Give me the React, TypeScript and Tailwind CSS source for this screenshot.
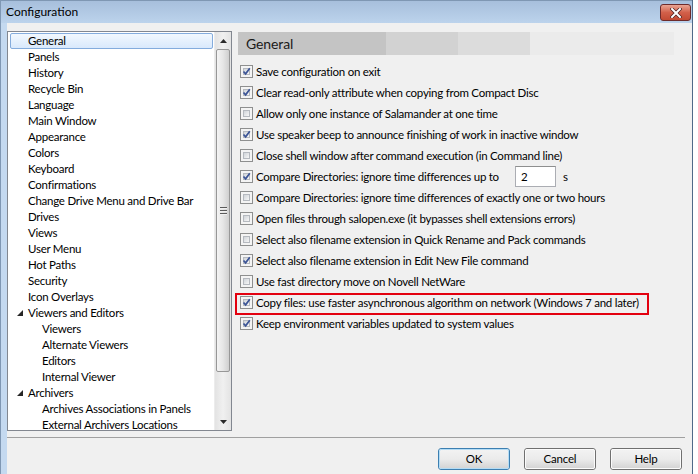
import React from 'react';

const font = { fontFamily: 'Lato, "Noto Sans", sans-serif' };

const treeItems: { label: string; level: number; expanded?: boolean; selected?: boolean }[] = [
    { label: 'General', level: 0, selected: true },
    { label: 'Panels', level: 0 },
    { label: 'History', level: 0 },
    { label: 'Recycle Bin', level: 0 },
    { label: 'Language', level: 0 },
    { label: 'Main Window', level: 0 },
    { label: 'Appearance', level: 0 },
    { label: 'Colors', level: 0 },
    { label: 'Keyboard', level: 0 },
    { label: 'Confirmations', level: 0 },
    { label: 'Change Drive Menu and Drive Bar', level: 0 },
    { label: 'Drives', level: 0 },
    { label: 'Views', level: 0 },
    { label: 'User Menu', level: 0 },
    { label: 'Hot Paths', level: 0 },
    { label: 'Security', level: 0 },
    { label: 'Icon Overlays', level: 0 },
    { label: 'Viewers and Editors', level: 0, expanded: true },
    { label: 'Viewers', level: 1 },
    { label: 'Alternate Viewers', level: 1 },
    { label: 'Editors', level: 1 },
    { label: 'Internal Viewer', level: 1 },
    { label: 'Archivers', level: 0, expanded: true },
    { label: 'Archives Associations in Panels', level: 1 },
    { label: 'External Archivers Locations', level: 1 },
];

const options: { label: string; on: boolean; input?: boolean; marked?: boolean }[] = [
    { label: 'Save configuration on exit', on: true },
    { label: 'Clear read-only attribute when copying from Compact Disc', on: true },
    { label: 'Allow only one instance of Salamander at one time', on: false },
    { label: 'Use speaker beep to announce finishing of work in inactive window', on: true },
    { label: 'Close shell window after command execution (in Command line)', on: false },
    { label: 'Compare Directories: ignore time differences up to', on: true, input: true },
    { label: 'Compare Directories: ignore time differences of exactly one or two hours', on: false },
    { label: 'Open files through salopen.exe (it bypasses shell extensions errors)', on: false },
    { label: 'Select also filename extension in Quick Rename and Pack commands', on: false },
    { label: 'Select also filename extension in Edit New File command', on: true },
    { label: 'Use fast directory move on Novell NetWare', on: false },
    { label: 'Copy files: use faster asynchronous algorithm on network (Windows 7 and later)', on: true, marked: true },
    { label: 'Keep environment variables updated to system values', on: true },
];

const CheckBox = ({ on }: { on: boolean }) => (
    <span className="relative w-[13px] h-[13px] shrink-0 border border-[#8e8f8f] bg-[#f4f4f4]">
        <span className="absolute inset-[2px] border border-[#b5b9bf] bg-gradient-to-br from-[#d0d4d9] to-[#f7f7f7]" />
        {on && (
            <svg className="absolute left-0 top-0" width="11" height="11" viewBox="0 0 11 11">
                <path d="M2.5 5.5 L4.6 7.8 L8.8 2.2" fill="none" stroke="#3b5496" strokeWidth="1.7" />
            </svg>
        )}
    </span>
);

const Button = ({ label, primary }: { label: string; primary?: boolean }) => (
    <div
        className={`w-[72px] h-[22px] rounded-[3px] border flex items-center justify-center text-[11.5px] tracking-[-0.2px] text-black ${primary ? 'border-[#3c7fb1]' : 'border-[#707070]'}`}
    >
        <div
            className={`w-full h-full rounded-[2px] border flex items-center justify-center bg-gradient-to-b from-[#f2f2f2] via-[#ebebeb] to-[#d5d5d5] ${primary ? 'border-[#b4dcf5]' : 'border-[#fbfbfb]'}`}
        >
            {label}
        </div>
    </div>
);

const ScrollBar = () => (
    <div className="w-[17px] h-full flex flex-col bg-gradient-to-r from-[#e3e3e3] via-[#f0f0f0] to-[#e3e3e3] border-l border-[#ececec]">
        <div className="h-[17px] flex items-center justify-center shrink-0">
            <svg width="7" height="4" viewBox="0 0 7 4"><polygon points="0,4 3.5,0 7,4" fill="#2a2a2a" /></svg>
        </div>
        <div className="mx-[1px] h-[323px] rounded-[2px] border border-[#979797] bg-gradient-to-r from-[#f4f4f4] via-[#e6e6e6] to-[#cfcfcf] flex items-center justify-center">
            <div className="flex flex-col gap-[1px]">
                <div className="w-[7px] h-[2px] bg-[#5a5a5a] border-b border-[#f0f0f0]" />
                <div className="w-[7px] h-[2px] bg-[#5a5a5a] border-b border-[#f0f0f0]" />
                <div className="w-[7px] h-[2px] bg-[#5a5a5a] border-b border-[#f0f0f0]" />
            </div>
        </div>
        <div className="flex-1" />
        <div className="h-[17px] flex items-center justify-center shrink-0">
            <svg width="7" height="4" viewBox="0 0 7 4"><polygon points="0,0 3.5,4 7,0" fill="#2a2a2a" /></svg>
        </div>
    </div>
);

const Tree = () => (
    <div className="w-[225px] h-[400px] border border-[#828790] bg-white flex overflow-hidden shrink-0">
        <div className="flex-1 pt-[1px] pl-[2px] overflow-hidden">
            {treeItems.map((it) => (
                <div key={it.label} className="relative h-[16px] flex items-center text-[11.5px] tracking-[-0.25px] text-black whitespace-nowrap">
                    {it.selected && (
                        <div className="absolute left-0 top-0 w-[203px] h-[16px] rounded-[2px] border border-[#84acdd] bg-gradient-to-b from-[#f2f8fe] to-[#d9e9fc]" />
                    )}
                    <div className="w-[18px] shrink-0 flex items-center justify-end pr-[5px]">
                        {it.expanded && (
                            <svg width="6" height="6" viewBox="0 0 6 6"><polygon points="6,0 6,6 0,6" fill="#262626" /></svg>
                        )}
                    </div>
                    <span className={`relative ${it.level === 1 ? 'pl-[14px]' : ''}`}>{it.label}</span>
                </div>
            ))}
        </div>
        <ScrollBar />
    </div>
);

const Panel = () => (
    <div className="flex-1 pl-[6px] pt-[1px]">
        <div className="relative w-[436px] h-[23px] flex bg-[#ebebeb]">
            <div className="w-[148px] bg-[#c4c4c4]" />
            <div className="w-[72px] bg-[#d2d2d2]" />
            <div className="w-[72px] bg-[#dcdcdc]" />
            <div className="absolute left-[8px] inset-y-0 flex items-center text-[14px] tracking-[-0.1px] text-[#1a1a1a]">General</div>
        </div>
        <div className="pt-[6px] pl-[2px]">
            {options.map((o) => (
                <div key={o.label} className="relative h-[21px] flex items-center text-[11.5px] tracking-[-0.25px] text-black whitespace-nowrap">
                    {o.marked && (
                        <div className="absolute left-[-5px] top-[1px] w-[414px] h-[22px] border-2 border-[#e3000f]" />
                    )}
                    <CheckBox on={o.on} />
                    {o.input ? (
                        <>
                            <span className="pl-[3px] w-[262px]">{o.label}</span>
                            <div className="w-[41px] h-[21px] bg-white border border-[#abadb3] border-t-[#8e8f8f] flex items-center pl-[5px]">2</div>
                            <span className="pl-[7px]">s</span>
                        </>
                    ) : (
                        <span className="pl-[3px]">{o.label}</span>
                    )}
                </div>
            ))}
        </div>
    </div>
);

export default function App() {
    return (
        <div className="w-[698px] h-[474px] bg-white overflow-hidden flex" style={font}>
            <div className="w-[693px] h-full flex flex-col border-r border-[#4f6a88] bg-[#c4d9f0]">
                <div className="h-[23px] shrink-0 flex items-center justify-between bg-gradient-to-b from-[#a7bfdc] to-[#bcd3ec] pl-[5px] pr-[1px] border-l border-t border-[#7f97b3]">
                    <span className="text-[12px] text-black">Configuration</span>
                    <div className="w-[31px] h-[17px] mt-[1px] rounded-[3px] border border-[#6d2b2b] bg-gradient-to-b from-[#e8a493] via-[#d2604a] to-[#c24a33] flex items-center justify-center">
                        <svg width="12" height="10" viewBox="0 0 12 10">
                            <path d="M2 1 L10 9 M10 1 L2 9" stroke="#4a2020" strokeWidth="3.4" strokeLinecap="square" />
                            <path d="M2 1 L10 9 M10 1 L2 9" stroke="#ffffff" strokeWidth="2" strokeLinecap="square" />
                        </svg>
                    </div>
                </div>
                <div className="flex-1 flex border-l border-[#7f97b3]">
                    <div className="w-[6px] shrink-0 bg-[#c4d9f0]" />
                    <div className="flex-1 bg-[#f0f0f0] flex flex-col pt-[8px]">
                        <div className="flex">
                            <Tree />
                            <Panel />
                        </div>
                        <div className="mt-[6px] w-[678px] h-[2px] border-t border-[#a0a0a0] border-b-white" />
                        <div className="mt-[9px] flex gap-[14px] pl-[431px]">
                            <Button label="OK" primary />
                            <Button label="Cancel" />
                            <Button label="Help" />
                        </div>
                    </div>
                </div>
            </div>
        </div>
    );
}
